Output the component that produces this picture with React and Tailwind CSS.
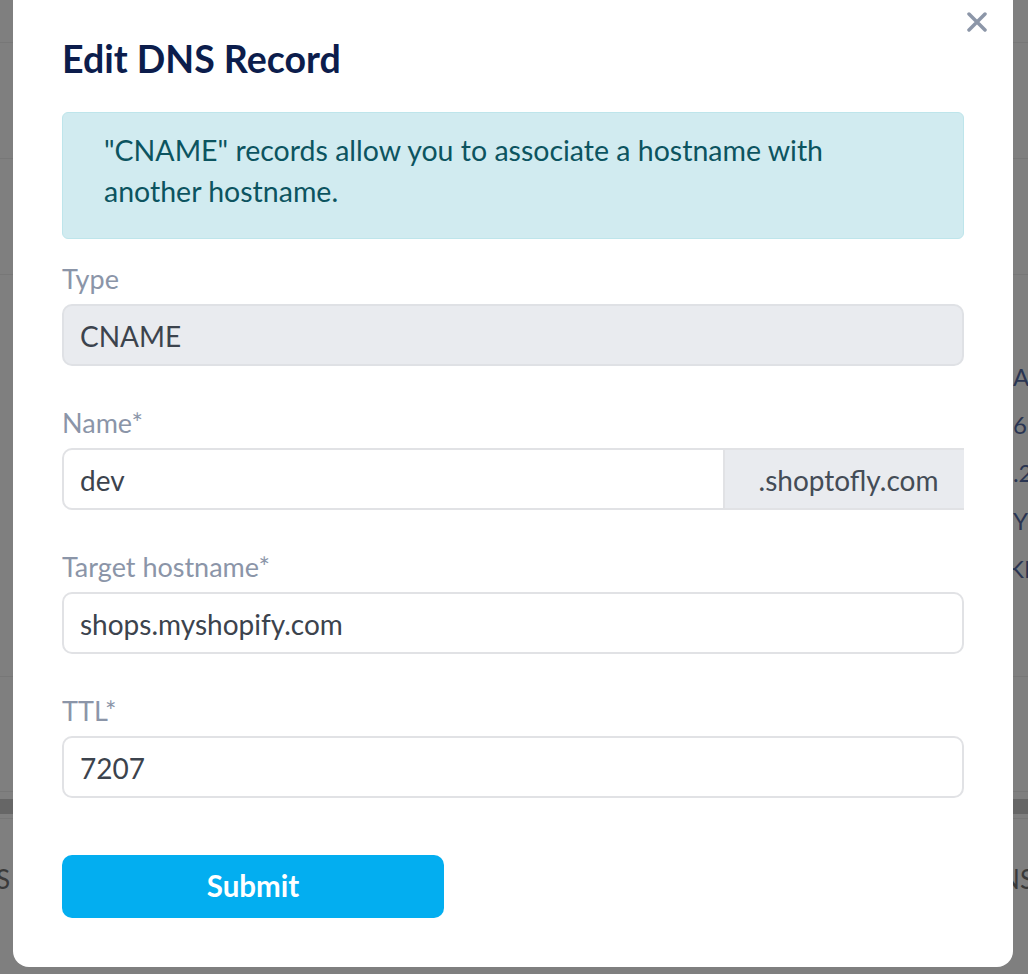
import React from "react";

const records = [
  { t: "AAAA", cls: "" },
  { t: "6", cls: "" },
  { t: "1.2", cls: "-ml-[14px]" },
  { t: "Y", cls: "" },
  { t: "KI", cls: "-ml-[5px]" },
];

export default function App() {
  return (
    <div className="relative h-[974px] w-full overflow-hidden bg-[#7f7f7f] font-['Lato',sans-serif]">
      {/* page underneath, already dimmed by the overlay */}
      <div className="flex flex-col">
        <div className="h-[43px] border-b border-[#777]" />
        <div className="h-[116px] border-b border-[#777]" />
        <div className="h-[116px] border-b border-[#777]" />
        <div className="h-[402px] border-b border-[#777] pt-[78px]">
          <div className="ml-[1013px] flex flex-col text-[24px] leading-[48px] text-[#2a3552]">
            {records.map((r) => (
              <div key={r.t} className={"whitespace-nowrap " + r.cls}>{r.t}</div>
            ))}
          </div>
        </div>
        <div className="h-[115px] border-b border-[#777]" />
        <div className="mt-[7px] h-[15px] bg-[#666]" />
        <div className="h-[5px] border-b border-[#777]" />
        <div className="flex h-[120px] items-center justify-between text-[26px] text-[#3a3a3a]">
          <span className="-ml-[4px]">S</span>
          <span className="-mr-[6px]">NS</span>
        </div>
      </div>

      {/* modal */}
      <div className="absolute left-[13px] top-[-20px] h-[987px] w-[1000px] rounded-[16px] bg-white px-[49px] pt-[57px]">
        <button className="absolute right-[26px] top-[32px] text-[#8c96a8]">
          <svg width="20" height="20" viewBox="0 0 20 20">
            <path d="M2 2 L18 18 M18 2 L2 18" stroke="currentColor" strokeWidth="3.5" strokeLinecap="round" />
          </svg>
        </button>

        <h2 className="text-[37.5px] font-bold leading-[44px] text-[#0c1d4c]">Edit DNS Record</h2>

        <div className="mt-[31px] rounded-[6px] border border-[#bee5eb] bg-[#d1ebf0] px-[41px] pb-[26px] pt-[17px] text-[28.5px] leading-[41px] text-[#0c5460]">
          "CNAME" records allow you to associate a hostname with
          <br />
          another hostname.
        </div>

        <div className="mt-[25px] flex flex-col">
          <Field label="Type">
            <div className="flex h-[62px] items-center rounded-[10px] border-2 border-[#dfe1e5] bg-[#e9ebef] px-[16px] pt-[2px] text-[28px] text-[#3c434d]">
              CNAME
            </div>
          </Field>

          <Field label="Name*">
            <div className="flex h-[62px]">
              <div className="flex flex-1 items-center rounded-l-[10px] border-2 border-[#e1e2e5] px-[16px] pt-[2px] text-[28px] text-[#3c434d]">
                dev
              </div>
              <div className="flex w-[239px] items-center justify-center border-y-2 border-[#e1e2e5] bg-[#e9ebef] pl-[8px] pt-[2px] text-[28px] text-[#444c56]">
                .shoptofly.com
              </div>
            </div>
          </Field>

          <Field label="Target hostname*">
            <Input value="shops.myshopify.com" />
          </Field>

          <Field label="TTL*" last>
            <Input value="7207" />
          </Field>
        </div>

        <button className="mt-[57px] flex h-[63px] w-[382px] items-center justify-center rounded-[10px] bg-[#03aef0] text-[29.5px] font-bold text-white">
          Submit
        </button>
      </div>
    </div>
  );
}

function Field({ label, children, last }) {
  return (
    <div className={last ? "" : "mb-[42px]"}>
      <div className="mb-[10px] text-[27px] leading-[30px] text-[#8b95a8]">{label}</div>
      {children}
    </div>
  );
}

function Input({ value }) {
  return (
    <div className="flex h-[62px] items-center rounded-[10px] border-2 border-[#e1e2e5] px-[16px] pt-[2px] text-[28px] text-[#3c434d]">
      {value}
    </div>
  );
}
